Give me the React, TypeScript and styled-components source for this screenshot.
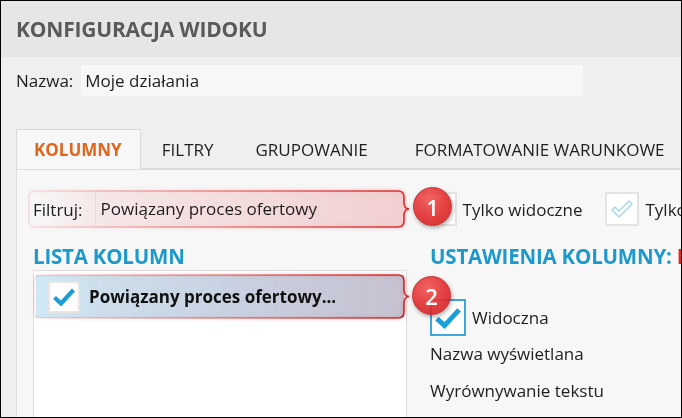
import React from 'react';
import styled, { createGlobalStyle } from 'styled-components';

const Global = createGlobalStyle`
  html, body { margin: 0; padding: 0; background: #fff; }
  body { font-family: "Open Sans", "Noto Sans", sans-serif; color: #1e1e1e; }
  * { box-sizing: border-box; }
`;

const Frame = styled.div`
  position: relative;
  width: 682px;
  height: 418px;
  border: 1px solid #000;
  background: #efefef;
  overflow: hidden;
  display: flex;
  flex-direction: column;
`;

const Header = styled.header`
  flex: none;
  height: 56px;
  background: #e6e6e6;
  display: flex;
  align-items: center;
  padding-left: 15px;
`;

const Title = styled.h1`
  margin: 0;
  font-size: 21px;
  font-weight: 700;
  color: #5a5a5a;
  letter-spacing: -0.2px;
`;

const NameRow = styled.div`
  flex: none;
  display: flex;
  align-items: center;
  padding: 8px 0 0 15px;
`;

const Label = styled.span`
  flex: none;
  font-size: 17px;
  color: #1e1e1e;
  white-space: nowrap;
`;

const NameInput = styled.div`
  flex: none;
  margin-left: 8px;
  width: 502px;
  height: 31px;
  background: #f7f7f7;
  padding-left: 4px;
  font-size: 17px;
  line-height: 31px;
`;

const TabBar = styled.nav`
  flex: none;
  display: flex;
  margin: 33px 0 0 15px;
  height: 41px;
  border-bottom: 2px solid #dcdcdc;
`;

const Tab = styled.div<{ $active?: boolean }>`
  flex: none;
  height: 40px;
  display: flex;
  align-items: center;
  padding: 0 ${p => (p.$active ? 18 : 20)}px 0 ${p => (p.$active ? 17 : 20)}px;
  font-size: 17px;
  font-weight: ${p => (p.$active ? 700 : 400)};
  color: ${p => (p.$active ? '#e0661c' : '#1e1e1e')};
  background: ${p => (p.$active ? '#f7f7f7' : 'transparent')};
  border: 1px solid ${p => (p.$active ? '#dadada' : 'transparent')};
  border-bottom: none;
  white-space: nowrap;
  &:last-child { margin-left: 5px; }
`;

const Panel = styled.section`
  flex: 1;
  margin-left: 15px;
  background: #f7f7f7;
  border-left: 1px solid #e0e0e0;
  padding: 20px 0 0 16px;
  display: flex;
  flex-direction: column;
  min-height: 0;
`;

const FilterRow = styled.div`
  display: flex;
  align-items: center;
  height: 38px;
  white-space: nowrap;
`;

const FilterInput = styled.div`
  flex: none;
  margin-left: 12px;
  width: 313px;
  height: 34px;
  border-left: 1px solid #e8e8e8;
  padding-left: 5px;
  font-size: 17px;
  line-height: 34px;
`;

const Check = styled.div<{ $variant: 'plain' | 'blue' | 'row' }>`
  flex: none;
  width: ${p => (p.$variant === 'blue' ? 36 : p.$variant === 'row' ? 32 : 34)}px;
  height: ${p => (p.$variant === 'blue' ? 37 : p.$variant === 'row' ? 32 : 34)}px;
  background: #fff;
  border: 2px solid
    ${p => (p.$variant === 'blue' ? '#3ea8dc' : p.$variant === 'row' ? '#ebe6e6' : '#e4e4e4')};
  display: flex;
  align-items: center;
  justify-content: center;
`;

const CheckLabel = styled.span`
  flex: none;
  font-size: 17px;
  margin-left: 6px;
`;

const FilterCheckGroup = styled.div<{ $gap: number }>`
  flex: none;
  display: flex;
  align-items: center;
  margin-left: ${p => p.$gap}px;
`;

const Columns = styled.div`
  flex: 1;
  display: grid;
  grid-template-columns: 374px 1fr;
  column-gap: 21px;
  margin-top: 15px;
  min-height: 0;
`;

const Col = styled.div`
  display: flex;
  flex-direction: column;
  min-height: 0;
  white-space: nowrap;
`;

const Heading = styled.h2<{ $indent?: number }>`
  margin: 0;
  padding-left: ${p => p.$indent ?? 0}px;
  font-size: 20.5px;
  line-height: 26px;
  font-weight: 700;
  color: #1d9acb;
  letter-spacing: -0.2px;
`;

const Red = styled.span`
  color: #e02a2a;
`;

const ListBox = styled.div`
  flex: 1;
  margin-top: 1px;
  background: #fff;
  border: 1px solid #dedede;
  border-bottom: none;
  padding: 4px 2px 2px 2px;
`;

const SelectedRow = styled.div`
  height: 43px;
  display: flex;
  align-items: center;
  padding-left: 12px;
  background: linear-gradient(90deg, #d0e9f5 0%, #cbe0f0 45%, #c9d3e3 100%);
`;

const RowText = styled.span`
  margin-left: 9px;
  font-size: 17px;
  font-weight: 700;
  color: #111;
`;

const SettingRow = styled.div<{ $top: number }>`
  display: flex;
  align-items: center;
  margin-top: ${p => p.$top}px;
  padding-left: 2px;
  font-size: 17px;
  line-height: 23px;
`;

const Highlight = styled.svg<{ $x: number; $y: number }>`
  position: absolute;
  left: ${p => p.$x}px;
  top: ${p => p.$y}px;
  overflow: visible;
  pointer-events: none;
  mix-blend-mode: multiply;
  filter: drop-shadow(0 0 2px rgba(235, 60, 60, 0.4));
`;

const Badge = styled.div<{ $x: number; $y: number }>`
  position: absolute;
  left: ${p => p.$x}px;
  top: ${p => p.$y}px;
  width: 39px;
  height: 39px;
  border-radius: 50%;
  background: radial-gradient(circle at 40% 30%, #f25454 0%, #e02b2b 55%, #c91d1d 100%);
  border: 1px solid #c21a1a;
  box-shadow: 1px 2px 4px rgba(0, 0, 0, 0.35);
  opacity: 0.9;
  color: #fff;
  font-family: "Open Sans", "Noto Sans", sans-serif;
  font-size: 22px;
  font-weight: 600;
  display: flex;
  align-items: center;
  justify-content: center;
`;

const CheckMark = ({ ghost = false, size = 24 }: { ghost?: boolean; size?: number }) =>
  ghost ? (
    <svg width={size} height={size} viewBox="0 0 24 24">
      <path
        d="M2 13 L5 10 L9 14 L19 4 L22 7 L9 20 Z"
        fill="none"
        stroke="#9fd6ef"
        strokeWidth="1.4"
        strokeLinejoin="round"
      />
    </svg>
  ) : (
    <svg width={size} height={size} viewBox="0 0 24 24">
      <path d="M2.5 12.5 L9 18.5 L21.5 5" fill="none" stroke="#1a9fd8" strokeWidth="4.2" />
    </svg>
  );

const Brace = ({ w, h, id, tint }: { w: number; h: number; id: string; tint: number }) => {
  const R = w - 6;
  const m = h / 2;
  const r = 6;
  const d = `M ${r} 0 H ${R - r} Q ${R} 0 ${R} ${r} V ${m - 7} Q ${R} ${m} ${R + 5} ${m} Q ${R} ${m} ${R} ${m + 7} V ${h - r} Q ${R} ${h} ${R - r} ${h} H ${r} Q 0 ${h} 0 ${h - r} V ${r} Q 0 0 ${r} 0 Z`;
  return (
    <>
      <defs>
        <linearGradient id={`${id}f`} x1="0" x2="1" y1="0" y2="0">
          <stop offset="0" stopColor="#ffe4e4" stopOpacity="0" />
          <stop offset="0.2" stopColor="#fad6d8" stopOpacity={tint * 0.4} />
          <stop offset="1" stopColor="#f4c4c8" stopOpacity={tint} />
        </linearGradient>
        <linearGradient id={`${id}s`} x1="0" x2="1" y1="0" y2="0">
          <stop offset="0" stopColor="#e83838" stopOpacity="0.12" />
          <stop offset="0.5" stopColor="#e83838" stopOpacity="0.55" />
          <stop offset="1" stopColor="#e32a2a" stopOpacity="1" />
        </linearGradient>
      </defs>
      <path d={d} fill={`url(#${id}f)`} stroke={`url(#${id}s)`} strokeWidth="1.6" />
    </>
  );
};

export default function App() {
  return (
    <>
      <Global />
      <Frame>
        <Header>
          <Title>KONFIGURACJA WIDOKU</Title>
        </Header>
        <NameRow>
          <Label>Nazwa:</Label>
          <NameInput>Moje działania</NameInput>
        </NameRow>
        <TabBar>
          <Tab $active>KOLUMNY</Tab>
          <Tab>FILTRY</Tab>
          <Tab>GRUPOWANIE</Tab>
          <Tab>FORMATOWANIE WARUNKOWE</Tab>
        </TabBar>
        <Panel>
          <FilterRow>
            <Label>Filtruj:</Label>
            <FilterInput>Powiązany proces ofertowy</FilterInput>
            <FilterCheckGroup $gap={15}>
              <Check $variant="plain" />
              <CheckLabel>Tylko widoczne</CheckLabel>
            </FilterCheckGroup>
            <FilterCheckGroup $gap={23}>
              <Check $variant="plain">
                <CheckMark ghost size={24} />
              </Check>
              <CheckLabel>Tylko</CheckLabel>
            </FilterCheckGroup>
          </FilterRow>
          <Columns>
            <Col>
              <Heading>LISTA KOLUMN</Heading>
              <ListBox>
                <SelectedRow>
                  <Check $variant="row">
                    <CheckMark size={24} />
                  </Check>
                  <RowText>Powiązany proces ofertowy...</RowText>
                </SelectedRow>
              </ListBox>
            </Col>
            <Col>
              <Heading $indent={2}>
                USTAWIENIA KOLUMNY: <Red>I</Red>
              </Heading>
              <SettingRow $top={30}>
                <Check $variant="blue">
                  <CheckMark size={28} />
                </Check>
                <CheckLabel>Widoczna</CheckLabel>
              </SettingRow>
              <SettingRow $top={6}>Nazwa wyświetlana</SettingRow>
              <SettingRow $top={14}>Wyrównywanie tekstu</SettingRow>
            </Col>
          </Columns>
        </Panel>

        <Highlight $x={28} $y={190} width={383} height={37}>
          <Brace w={381} h={36} id="h1" tint={0.38} />
        </Highlight>
        <Highlight $x={33} $y={274} width={378} height={44}>
          <Brace w={376} h={43} id="h2" tint={0.18} />
        </Highlight>
        <Badge $x={412} $y={186}>1</Badge>
        <Badge $x={411} $y={275}>2</Badge>
      </Frame>
    </>
  );
}
